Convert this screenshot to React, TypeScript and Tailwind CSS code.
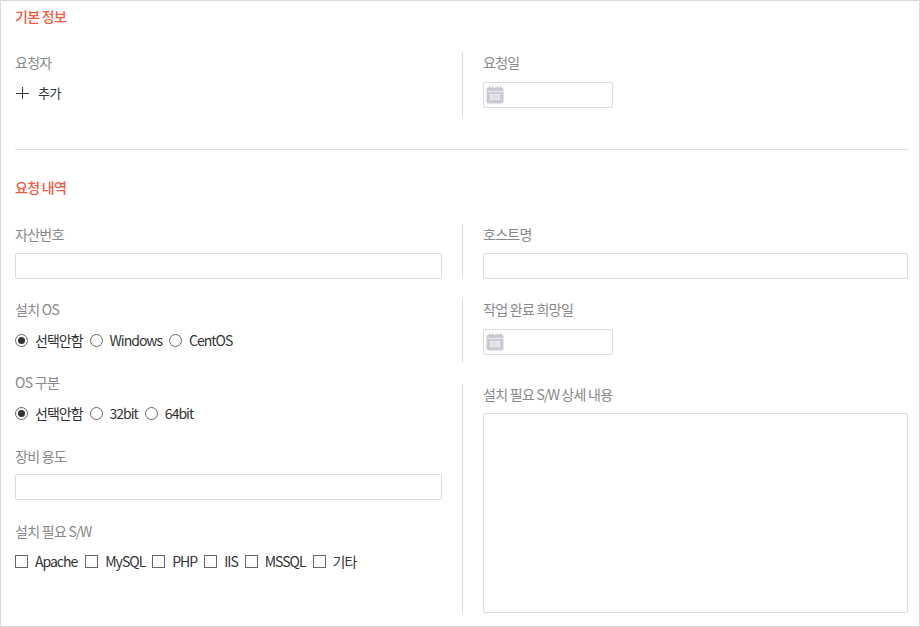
const Label = ({ children }: { children: React.ReactNode }) => (
    <div className="h-[20px] text-[14px] leading-[20px] text-[#888] tracking-[-0.7px]">{children}</div>
)

const Title = ({ children }: { children: React.ReactNode }) => (
    <div className="h-[20px] text-[14px] leading-[20px] font-medium text-[#f4583f] tracking-[-0.7px]">{children}</div>
)

const TextInput = () => <div className="h-[26px] rounded-[2px] border border-[#dcdcdc] bg-white"></div>

const DateInput = () => (
    <div className="flex h-[26px] w-[130px] items-center rounded-[2px] border border-[#dcdcdc] bg-white pl-[2px]">
        <svg width="18" height="18" viewBox="0 0 18 18">
            <rect x="0.5" y="1.5" width="17" height="16" rx="2" fill="#c9cbd2" />
            <rect x="0.5" y="5" width="17" height="1" fill="#eceded" />
            <path d="M3.5 0.5v2M6.5 0.5v2M11.5 0.5v2M14.5 0.5v2" stroke="#b9bbc4" strokeWidth="1" />
            <path d="M4 8h10v6H4z" fill="#f4f5f6" />
            <path d="M4 10h10M4 12h10M6.5 8v6M9 8v6M11.5 8v6" stroke="#c9cbd2" strokeWidth="0.6" />
        </svg>
    </div>
)

const Radio = ({ label, checked }: { label: string; checked?: boolean }) => (
    <label className="flex items-center">
        <span className="flex h-[13px] w-[13px] items-center justify-center rounded-full border border-[#666] bg-white">
            {checked && <span className="h-[7px] w-[7px] rounded-full bg-[#333]"></span>}
        </span>
        <span className="ml-[7px]">{label}</span>
    </label>
)

const Check = ({ label }: { label: string }) => (
    <label className="flex items-center first:mr-[1px]">
        <span className="h-[13px] w-[13px] border border-[#666] bg-white"></span>
        <span className="ml-[7px]">{label}</span>
    </label>
)

const Options = ({ children, className }: { children: React.ReactNode; className: string }) => (
    <div className={`flex h-[20px] items-center gap-x-[7px] text-[14px] leading-[20px] text-[#333] tracking-[-1px] ${className}`}>
        {children}
    </div>
)

export default function App() {
    return (
        <div
            className="h-[627px] w-[920px] overflow-hidden border border-[#d9d9d9] bg-white pr-[11px] pl-[14px]"
            style={{ fontFamily: '"Noto Sans CJK KR", "Noto Sans", sans-serif' }}
        >
            {/* 기본 정보 */}
            <div className="pt-[5px]">
                <Title>기본 정보</Title>
            </div>

            <div className="mt-[26px] flex h-[65px]">
                <div className="mr-[20px] w-[427px]">
                    <Label>요청자</Label>
                    <div className="mt-[11px] flex h-[20px] items-center text-[13px] tracking-[-0.5px] text-[#333]">
                        <svg width="14" height="14" viewBox="0 0 14 14" className="mr-[9px]">
                            <path d="M7.5 1v12M1 7.5h13" stroke="#333" strokeWidth="1" />
                        </svg>
                        <span>추가</span>
                    </div>
                </div>
                <div className="flex-1 border-l border-[#dcdcdc] pl-[20px]">
                    <Label>요청일</Label>
                    <div className="mt-[10px]">
                        <DateInput />
                    </div>
                </div>
            </div>

            <div className="mt-[32px] border-t border-[#dcdcdc]"></div>

            {/* 요청 내역 */}
            <div className="mt-[27px]">
                <Title>요청 내역</Title>
            </div>

            <div className="mt-[27px] flex h-[55px]">
                <div className="mr-[20px] w-[427px]">
                    <Label>자산번호</Label>
                    <div className="mt-[9px]">
                        <TextInput />
                    </div>
                </div>
                <div className="flex-1 border-l border-[#dcdcdc] pl-[20px]">
                    <Label>호스트명</Label>
                    <div className="mt-[9px]">
                        <TextInput />
                    </div>
                </div>
            </div>

            <div className="mt-[20px] flex h-[64px]">
                <div className="mr-[20px] w-[427px]">
                    <Label>설치 OS</Label>
                    <Options className="mt-[11px]">
                        <Radio label="선택안함" checked />
                        <Radio label="Windows" />
                        <Radio label="CentOS" />
                    </Options>
                </div>
                <div className="flex-1 border-l border-[#dcdcdc] pl-[20px]">
                    <Label>작업 완료 희망일</Label>
                    <div className="mt-[10px]">
                        <DateInput />
                    </div>
                </div>
            </div>

            <div className="mt-[21px] flex">
                <div className="mr-[20px] w-[427px]">
                    <div className="-mt-[12px]">
                        <Label>OS 구분</Label>
                    </div>
                    <Options className="mt-[11px]">
                        <Radio label="선택안함" checked />
                        <Radio label="32bit" />
                        <Radio label="64bit" />
                    </Options>
                    <div className="mt-[23px]">
                        <Label>장비 용도</Label>
                    </div>
                    <div className="mt-[8px]">
                        <TextInput />
                    </div>
                    <div className="mt-[21px]">
                        <Label>
                            설치 필요 <span className="tracking-[-1.2px]">S/W</span>
                        </Label>
                    </div>
                    <Options className="mt-[10px]">
                        <Check label="Apache" />
                        <Check label="MySQL" />
                        <Check label="PHP" />
                        <Check label="IIS" />
                        <Check label="MSSQL" />
                        <Check label="기타" />
                    </Options>
                </div>
                <div className="flex h-[229px] flex-1 flex-col border-l border-[#dcdcdc] pl-[20px]">
                    <Label>
                        설치 필요 <span className="tracking-[-1.3px]">S/W</span> 상세 내용
                    </Label>
                    <div className="mt-[9px] h-[200px] rounded-[2px] border border-[#dcdcdc] bg-white"></div>
                </div>
            </div>
        </div>
    )
}
